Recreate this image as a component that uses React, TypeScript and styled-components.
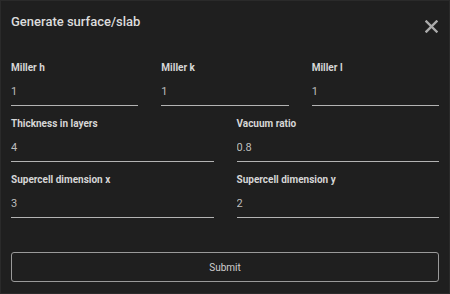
import React from "react";
import styled, { createGlobalStyle } from "styled-components";

const Global = createGlobalStyle`
  html, body { margin: 0; padding: 0; background: #1f1f1f; }
  * { box-sizing: border-box; }
`;

const Dialog = styled.div`
  width: 450px;
  height: 294px;
  background: #1f1f1f;
  border: 1px solid #2a2a2a;
  padding: 10px 10px 0 10px;
  font-family: Roboto, "Liberation Sans", sans-serif;
  display: flex;
  flex-direction: column;
`;

const Header = styled.div`
  display: flex;
  justify-content: space-between;
  align-items: flex-start;
  height: 50px;
`;

const Title = styled.h2`
  margin: 3px 0 0 0;
  font-size: 13px;
  font-weight: 500;
  line-height: 15px;
  color: #dcdcdc;
`;

const Close = styled.button`
  margin: 8px 1px 0 0;
  padding: 0;
  width: 14px;
  height: 14px;
  border: none;
  background: none;
  display: flex;
  align-items: center;
  justify-content: center;
`;

const Row = styled.div<{ $cols: number }>`
  display: grid;
  grid-template-columns: repeat(${(p) => p.$cols}, 1fr);
  column-gap: 23px;
  margin-bottom: 11px;
`;

const Field = styled.label`
  display: flex;
  flex-direction: column;
`;

const Label = styled.span`
  font-size: 10px;
  font-weight: 700;
  line-height: 13px;
  color: #d6d6d6;
`;

const Input = styled.input`
  margin-top: 6px;
  height: 26px;
  padding: 0 0 3px 0;
  background: transparent;
  border: none;
  border-bottom: 1px solid #b3b3b3;
  color: #bdbdbd;
  font-family: Roboto, "Liberation Sans", sans-serif;
  font-size: 11px;
  outline: none;
  width: 100%;
`;

const Submit = styled.button`
  margin-top: 23px;
  height: 30px;
  width: 100%;
  background: transparent;
  border: 1px solid #9a9a9a;
  border-radius: 3px;
  color: #cfcfcf;
  font-family: Roboto, "Liberation Sans", sans-serif;
  font-size: 10px;
`;

const rows: { label: string; value: string }[][] = [
  [
    { label: "Miller h", value: "1" },
    { label: "Miller k", value: "1" },
    { label: "Miller l", value: "1" },
  ],
  [
    { label: "Thickness in layers", value: "4" },
    { label: "Vacuum ratio", value: "0.8" },
  ],
  [
    { label: "Supercell dimension x", value: "3" },
    { label: "Supercell dimension y", value: "2" },
  ],
];

export default function App() {
  return (
    <>
      <Global />
      <Dialog>
        <Header>
          <Title>Generate surface/slab</Title>
          <Close aria-label="close">
            <svg width="13" height="13" viewBox="0 0 13 13">
              <path d="M1.5 1.5 L11.5 11.5 M11.5 1.5 L1.5 11.5" stroke="#ababab" strokeWidth="2.4" strokeLinecap="square" />
            </svg>
          </Close>
        </Header>
        {rows.map((r, i) => (
          <Row key={i} $cols={r.length}>
            {r.map((f) => (
              <Field key={f.label}>
                <Label>{f.label}</Label>
                <Input defaultValue={f.value} />
              </Field>
            ))}
          </Row>
        ))}
        <Submit>Submit</Submit>
      </Dialog>
    </>
  );
}
